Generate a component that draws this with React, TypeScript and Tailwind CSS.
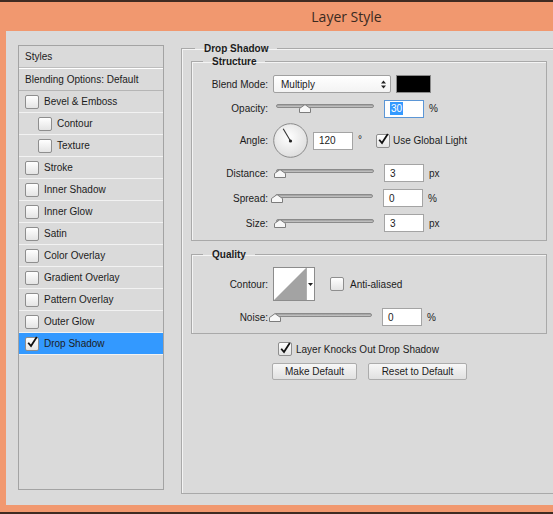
import type { ReactNode } from "react";

const labelCls = "w-[76px] shrink-0 text-right";

const Check = ({ checked }: { checked?: boolean }) => (
    <span className="flex h-[14px] w-[14px] shrink-0 items-center justify-center rounded-[2px] border border-[#8e8e8e] bg-linear-to-b from-white to-[#e4e4e4]">
        {checked && (
            <svg width="13" height="13" viewBox="0 0 12 12" className="-translate-y-[1px]">
                <path d="M2.2 6.2 L5 9.6 L10.8 0.6" fill="none" stroke="#111" strokeWidth="1.8" />
            </svg>
        )}
    </span>
);

const Slider = ({ thumb, ml = "ml-[8px]" }: { thumb: string; ml?: string }) => (
    <div className={`relative h-full w-[98px] shrink-0 ${ml}`}>
        <div className="absolute left-0 right-0 top-[5px] h-[4px] rounded-full border border-[#8a8a8a] bg-linear-to-b from-[#9c9c9c] to-[#c9c9c9]" />
        <svg className={`absolute top-[5px] ${thumb}`} width="12" height="9" viewBox="0 0 12 9">
            <path d="M0.5 8.5 V4.5 L6 0.6 L11.5 4.5 V8.5 Z" fill="#f7f7f7" stroke="#7c7c7c" />
        </svg>
    </div>
);

const NumBox = ({ value, focus }: { value: string; focus?: boolean }) => (
    <div
        className={`flex h-[18px] w-[40px] shrink-0 items-center border bg-white pl-[5px] ${
            focus ? "border-[#5b96d6]" : "border-[#a4a4a4]"
        }`}
    >
        {focus ? <span className="bg-[#3399ff] px-px text-white">{value}</span> : value}
    </div>
);

const SliderRow = ({
    label,
    thumb,
    value,
    unit,
    cls,
    ml,
    focus,
}: {
    label: string;
    thumb: string;
    value: string;
    unit: string;
    cls: string;
    ml?: string;
    focus?: boolean;
}) => (
    <div className={`flex items-center ${cls}`}>
        <span className={labelCls}>{label}</span>
        <Slider thumb={thumb} ml={ml} />
        <div className="ml-[10px]">
            <NumBox value={value} focus={focus} />
        </div>
        <span className="ml-[5px]">{unit}</span>
    </div>
);

const Group = ({ title, className, children }: { title: string; className: string; children: ReactNode }) => (
    <fieldset className={`border border-[#a9a9a9] shadow-[inset_1px_1px_0_#f4f4f4] ${className}`}>
        <legend className="ml-[11px] px-[9px] font-bold">{title}</legend>
        {children}
    </fieldset>
);

const styles: { name: string; nested?: boolean; checked?: boolean }[] = [
    { name: "Bevel & Emboss" },
    { name: "Contour", nested: true },
    { name: "Texture", nested: true },
    { name: "Stroke" },
    { name: "Inner Shadow" },
    { name: "Inner Glow" },
    { name: "Satin" },
    { name: "Color Overlay" },
    { name: "Gradient Overlay" },
    { name: "Pattern Overlay" },
    { name: "Outer Glow" },
    { name: "Drop Shadow", checked: true },
];

const StyleList = () => (
    <div className="mt-[3px] h-[445px] w-[146px] shrink-0 border border-[#a3a3a3]">
        <div className="flex h-[22px] items-center border-b border-[#bdbdbd] pl-[6px]">Styles</div>
        <div className="flex h-[23px] items-center border-t border-b border-t-white border-b-[#b5b5b5] pl-[6px]">
            Blending Options: Default
        </div>
        {styles.map((s) => (
            <div
                key={s.name}
                className={`flex h-[22px] items-center gap-[5px] border-b border-[#f2f2f2] ${
                    s.nested ? "pl-[19px]" : "pl-[6px]"
                } ${s.checked ? "bg-[#3399ff]" : ""}`}
            >
                <Check checked={s.checked} />
                <span>{s.name}</span>
            </div>
        ))}
    </div>
);

const AngleDial = () => (
    <svg width="35" height="35" viewBox="0 0 35 35" className="ml-[5px] shrink-0">
        <defs>
            <radialGradient id="dial" cx="45%" cy="40%" r="65%">
                <stop offset="0%" stopColor="#ffffff" />
                <stop offset="100%" stopColor="#dcdcdc" />
            </radialGradient>
        </defs>
        <circle cx="17.5" cy="17.5" r="16.8" fill="url(#dial)" stroke="#8a8a8a" />
        <line x1="17.5" y1="18" x2="10.2" y2="5.8" stroke="#333" strokeWidth="1.1" />
        <circle cx="17.5" cy="18" r="1.6" fill="#222" />
    </svg>
);

const App = () => {
    return (
        <div className="h-[514px] w-[553px] overflow-hidden bg-[#3f2b22] pt-[2px] font-['Liberation_Sans',Arial,sans-serif] text-[10px] leading-[13px] text-[#1c1c1c]">
            <div className="flex h-[510px] w-[693px] flex-col bg-[#f1986f]">
                <div className="flex h-[29px] items-center justify-center font-['Open_Sans',sans-serif] text-[14px] text-[#3b2a21]">
                    Layer Style
                </div>
                <div className="mx-[6px] flex h-[474px] items-start bg-[#dadada] pl-[12px] pt-[11px]">
                    <StyleList />
                    <fieldset className="ml-[17px] h-[452px] w-[390px] shrink-0 border border-[#a9a9a9] px-[9px] shadow-[inset_1px_1px_0_#f4f4f4]">
                        <legend className="ml-[4px] px-[9px] font-bold">Drop Shadow</legend>

                        <Group title="Structure" className="w-[356px] pb-[8px] pt-[7px]">
                            <div className="flex h-[18px] items-center">
                                <span className={labelCls}>Blend Mode:</span>
                                <div className="ml-[5px] flex h-[18px] w-[118px] items-center justify-between rounded-[2px] border border-[#a0a0a0] bg-linear-to-b from-white to-[#f3f3f3] pl-[7px] pr-[4px]">
                                    <span>Multiply</span>
                                    <svg width="5" height="9" viewBox="0 0 5 9">
                                        <path d="M0 3.5 L2.5 0.5 L5 3.5 Z M0 5.5 L2.5 8.5 L5 5.5 Z" fill="#222" />
                                    </svg>
                                </div>
                                <div className="ml-[5px] h-[18px] w-[35px] border border-[#8a8a8a] bg-black" />
                            </div>

                            <SliderRow label="Opacity:" thumb="left-[23px]" value="30" unit="%" cls="mt-[6px] h-[19px]" focus />

                            <div className="mt-[5px] flex h-[35px] items-center">
                                <span className={labelCls}>Angle:</span>
                                <AngleDial />
                                <div className="ml-[5px]">
                                    <NumBox value="120" />
                                </div>
                                <span className="ml-[5px] -translate-y-[1px]">°</span>
                                <div className="ml-[14px] flex items-center gap-[3px]">
                                    <Check checked />
                                    <span>Use Global Light</span>
                                </div>
                            </div>

                            <SliderRow label="Distance:" thumb="left-[-2px]" value="3" unit="px" cls="mt-[6px] h-[18px]" />
                            <SliderRow label="Spread:" thumb="left-[-4px]" value="0" unit="%" cls="mt-[7px] h-[18px]" ml="ml-[7px]" />
                            <SliderRow label="Size:" thumb="left-[-2px]" value="3" unit="px" cls="mt-[7px] h-[18px]" />
                        </Group>

                        <Group title="Quality" className="mt-[7px] w-[356px] pb-[7px] pt-[6px]">
                            <div className="flex h-[34px] items-center">
                                <span className={labelCls}>Contour:</span>
                                <div className="ml-[5px] flex h-[34px] border border-[#8c8c8c] bg-white">
                                    <svg width="32" height="32" viewBox="0 0 32 32">
                                        <polygon points="0,32 32,0 32,32" fill="#a3a3a3" />
                                    </svg>
                                    <div className="flex w-[8px] items-center justify-center border-l border-[#b0b0b0] bg-white">
                                        <svg width="5" height="3" viewBox="0 0 5 3">
                                            <path d="M0 0 H5 L2.5 3 Z" fill="#222" />
                                        </svg>
                                    </div>
                                </div>
                                <div className="ml-[15px] flex items-center gap-[6px]">
                                    <Check />
                                    <span>Anti-aliased</span>
                                </div>
                            </div>
                            <SliderRow label="Noise:" thumb="left-[-5px]" value="0" unit="%" cls="mt-[7px] h-[18px]" ml="ml-[6px]" />
                        </Group>

                        <div className="mt-[8px] flex items-center gap-[4px] pl-[87px]">
                            <Check checked />
                            <span>Layer Knocks Out Drop Shadow</span>
                        </div>

                        <div className="mt-[7px] flex gap-[11px] pl-[81px]">
                            <button className="h-[17px] w-[85px] rounded-[2px] border border-[#acacac] bg-linear-to-b from-[#f7f7f7] to-[#e1e1e1]">
                                Make Default
                            </button>
                            <button className="h-[17px] w-[99px] rounded-[2px] border border-[#acacac] bg-linear-to-b from-[#f7f7f7] to-[#e1e1e1]">
                                Reset to Default
                            </button>
                        </div>
                    </fieldset>
                </div>
            </div>
        </div>
    );
};

export default App;
